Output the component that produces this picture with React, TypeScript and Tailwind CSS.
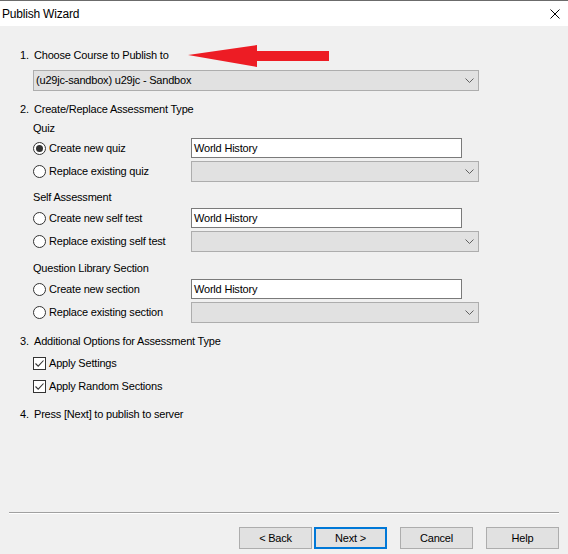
import React from "react";

const font = { fontFamily: '"Liberation Sans", Arial, sans-serif' };
const txt = "text-[11px] tracking-[-0.2px] text-black leading-none";

function Chevron() {
  return (
    <svg width="9" height="5" viewBox="0 0 9 5" className="shrink-0">
      <path d="M0.5 0.5 L4.5 4.5 L8.5 0.5" fill="none" stroke="#606060" strokeWidth="1" />
    </svg>
  );
}

function Combo({ text, className = "" }: { text?: string; className?: string }) {
  return (
    <div
      className={`flex items-center justify-between h-[21px] bg-[#e1e1e1] border border-[#adadad] pl-[2px] pr-[4px] ${className}`}
    >
      <span className={txt}>{text}</span>
      <Chevron />
    </div>
  );
}

function TextBox({ value }: { value: string }) {
  return (
    <div className="flex items-center h-[20px] w-[271px] bg-white border border-[#7a7a7a] pl-[2px]">
      <span className={txt}>{value}</span>
    </div>
  );
}

function Radio({ checked, label }: { checked?: boolean; label: string }) {
  return (
    <div className="flex items-center w-[158px]">
      <div className="w-[13px] h-[13px] rounded-full border border-[#333333] bg-white flex items-center justify-center shrink-0">
        {checked && <div className="w-[7px] h-[7px] rounded-full bg-[#333333]" />}
      </div>
      <span className={`ml-[3px] ${txt}`}>{label}</span>
    </div>
  );
}

function Check({ label }: { label: string }) {
  return (
    <div className="flex items-center h-[16px]">
      <div className="w-[13px] h-[13px] border border-[#333333] bg-white flex items-center justify-center shrink-0">
        <svg width="11" height="11" viewBox="0 0 11 11">
          <path d="M1.5 5.5 L4.2 8.2 L9.5 2.5" fill="none" stroke="#333333" strokeWidth="1.1" />
        </svg>
      </div>
      <span className={`ml-[3px] ${txt}`}>{label}</span>
    </div>
  );
}

function Heading({ num, text, className = "" }: { num: string; text: string; className?: string }) {
  return (
    <div className={`flex items-center h-[16px] pl-[20px] ${className}`}>
      <span className={`w-[14px] ${txt}`}>{num}</span>
      <span className={txt}>{text}</span>
    </div>
  );
}

function Label({ text, className = "" }: { text: string; className?: string }) {
  return (
    <div className={`flex items-center h-[16px] pl-[33px] ${className}`}>
      <span className={txt}>{text}</span>
    </div>
  );
}

function Button({ label, primary }: { label: string; primary?: boolean }) {
  return (
    <div
      className={`flex items-center justify-center w-[73px] h-[22px] bg-[#e1e1e1] ${
        primary ? "border-2 border-[#0078d7]" : "border border-[#adadad]"
      }`}
    >
      <span className={txt}>{label}</span>
    </div>
  );
}

export default function App() {
  return (
    <div className="w-[568px] h-[554px] flex flex-col bg-[#f0f0f0] overflow-hidden" style={font}>
      {/* Title bar */}
      <div className="h-[26px] shrink-0 bg-white border-t border-[#6b6b6b] flex items-center justify-between pl-[2px] pr-[8px]">
        <span className="text-[12px] tracking-[-0.2px] text-black leading-none">Publish Wizard</span>
        <svg width="10" height="10" viewBox="0 0 10 10">
          <path d="M0.5 0.5 L9.5 9.5 M9.5 0.5 L0.5 9.5" stroke="#000" strokeWidth="1" />
        </svg>
      </div>

      {/* Body */}
      <div className="flex flex-col relative">
        <Heading num="1." text="Choose Course to Publish to" className="mt-[21px]" />
        {/* red annotation arrow */}
        <svg
          className="absolute left-[186px] top-[19px]"
          width="146"
          height="24"
          viewBox="0 0 146 24"
        >
          <polygon points="2,10 71,0 71,6 143,6 143,16 71,16 71,22" fill="#ed1c24" />
        </svg>
        <Combo text="(u29jc-sandbox) u29jc - Sandbox" className="mt-[7px] ml-[33px] w-[446px]" />

        <Heading num="2." text="Create/Replace Assessment Type" className="mt-[10px]" />
        <Label text="Quiz" className="mt-[3px]" />
        <div className="flex items-center pl-[33px] mt-[2px] h-[20px]">
          <Radio checked label="Create new quiz" />
          <TextBox value="World History" />
        </div>
        <div className="flex items-center pl-[33px] mt-[3px] h-[21px]">
          <Radio label="Replace existing quiz" />
          <Combo className="w-[288px]" />
        </div>

        <Label text="Self Assessment" className="mt-[7px]" />
        <div className="flex items-center pl-[33px] mt-[3px] h-[20px]">
          <Radio label="Create new self test" />
          <TextBox value="World History" />
        </div>
        <div className="flex items-center pl-[33px] mt-[3px] h-[21px]">
          <Radio label="Replace existing self test" />
          <Combo className="w-[288px]" />
        </div>

        <Label text="Question Library Section" className="mt-[8px]" />
        <div className="flex items-center pl-[33px] mt-[3px] h-[20px]">
          <Radio label="Create new section" />
          <TextBox value="World History" />
        </div>
        <div className="flex items-center pl-[33px] mt-[3px] h-[21px]">
          <Radio label="Replace existing section" />
          <Combo className="w-[288px]" />
        </div>

        <Heading num="3." text="Additional Options for Assessment Type" className="mt-[10px]" />
        <div className="pl-[33px] mt-[6px]">
          <Check label="Apply Settings" />
        </div>
        <div className="pl-[33px] mt-[7px]">
          <Check label="Apply Random Sections" />
        </div>

        <Heading num="4." text="Press [Next] to publish to server" className="mt-[12px]" />
      </div>

      <div className="flex-1" />

      {/* Separator */}
      <div className="mx-[9px] h-[2px] shrink-0 flex flex-col">
        <div className="h-[1px] bg-[#a0a0a0]" />
        <div className="h-[1px] bg-white" />
      </div>

      {/* Buttons */}
      <div className="flex justify-end items-center pr-[9px] mt-[13px] mb-[5px] h-[22px] shrink-0">
        <Button label="< Back" />
        <div className="w-[2px]" />
        <Button label="Next >" primary />
        <div className="w-[13px]" />
        <Button label="Cancel" />
        <div className="w-[13px]" />
        <Button label="Help" />
      </div>
    </div>
  );
}
